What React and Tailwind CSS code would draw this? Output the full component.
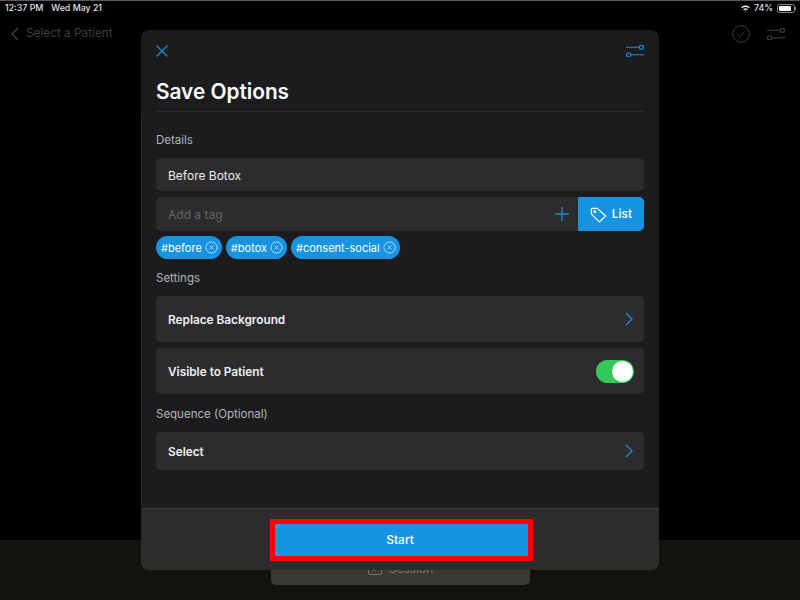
import React from "react";

const Sliders = ({ color }) => (
  <svg viewBox="0 0 18 12" width="18" height="12" fill="none" stroke={color} strokeWidth="1.1">
    <path d="M0 2.3H13" />
    <circle cx="15.4" cy="2.3" r="2.1" />
    <circle cx="2.6" cy="9.8" r="2.1" />
    <path d="M5 9.8H18" />
  </svg>
);

const Chevron = () => (
  <svg viewBox="0 0 8 14" width="8" height="14" fill="none" stroke="#1a8cd8" strokeWidth="1.3">
    <path d="M1 1l6 6-6 6" />
  </svg>
);

const Chip = ({ label }) => (
  <div className="flex items-center h-[23px] pl-[5px] pr-[4px] gap-[3px] rounded-full bg-[#1694e2] text-white text-[11px]">
    <span className="pt-[1px]">{label}</span>
    <svg viewBox="0 0 14 14" width="13" height="13" fill="none" stroke="#cfe9fa" strokeWidth="0.9">
      <circle cx="7" cy="7" r="6" />
      <path d="M5 5l4 4M9 5l-4 4" />
    </svg>
  </div>
);

const Label = ({ children, className }) => (
  <div className={`text-[11.5px] leading-[14px] text-[#b4b4b6] ${className}`}>{children}</div>
);

export default function App() {
  return (
    <div className="relative w-[800px] h-[600px] overflow-hidden bg-black flex flex-col font-['Inter',sans-serif]">
      <div className="h-[1px] bg-[#5a5a5a]" />
      <div className="flex items-center justify-between h-[14px] pl-[5px] pr-[4px] text-[8.8px] font-medium text-[#e2e2e2]">
        <div className="flex gap-[8px]">
          <span>12:37 PM</span>
          <span>Wed May 21</span>
        </div>
        <div className="flex items-center gap-[4px]">
          <svg viewBox="0 0 10 8" width="9" height="7" fill="#e5e5e5">
            <path d="M0 2.6C2.7 0 7.3 0 10 2.6L8.9 3.7C6.8 1.8 3.2 1.8 1.1 3.7zM2.2 4.8C3.8 3.3 6.2 3.3 7.8 4.8L6.7 5.9C5.7 5 4.3 5 3.3 5.9zM3.9 6.6C4.5 6.1 5.5 6.1 6.1 6.6L5 7.8z" />
          </svg>
          <span>74%</span>
          <div className="flex items-center">
            <div className="w-[18px] h-[9px] rounded-[2.5px] border border-[#888] p-[1px] flex">
              <div className="w-[12px] bg-white rounded-[1px]" />
            </div>
            <div className="w-[1px] h-[3px] bg-[#888]" />
          </div>
        </div>
      </div>
      <div className="flex items-center justify-between pl-[10px] pr-[15px] h-[38px]">
        <div className="flex items-center gap-[7px] text-[#3f3f3f] text-[11.8px]">
          <svg viewBox="0 0 9 14" width="9" height="14" fill="none" stroke="#3f3f3f" strokeWidth="1.4">
            <path d="M8 1L2 7l6 6" />
          </svg>
          <span>Select a Patient</span>
        </div>
        <div className="flex items-center gap-[17px]">
          <svg viewBox="0 0 18 18" width="18" height="18" fill="none" stroke="#3f3f3f" strokeWidth="1">
            <circle cx="9" cy="9" r="8.3" />
            <path d="M5.5 9.3l2.4 2.3 4.6-5" />
          </svg>
          <Sliders color="#3f3f3f" />
        </div>
      </div>
      <div className="flex-1" />
      <div className="h-[60px] bg-[#11130e] flex justify-start pl-[271px]">
        <div className="w-[259px] h-[45px] rounded-b-[5px] bg-[#383a33] flex items-start justify-center pt-[22px] gap-[7px] text-[12px] leading-[14px] text-[#77776f]">
          <svg viewBox="0 0 14 13" width="14" height="13" fill="none" stroke="#77776f" strokeWidth="1">
            <rect x="0.5" y="2" width="13" height="10.5" rx="1.5" />
            <path d="M4 6.5l2.5 2.5 3.5-4" />
          </svg>
          <span>Session</span>
        </div>
      </div>

      <div className="absolute left-[141px] top-[30px] w-[518px] h-[540px] rounded-[8px] bg-[#1c1c1e] flex flex-col overflow-hidden">
        <div className="absolute left-0 top-[83px] w-[1px] h-[427px] bg-[#2a2a2c]" />
        <div className="flex-1 px-[15px]">
          <div className="flex items-center justify-between h-[42px]">
            <svg viewBox="0 0 12 12" width="12" height="12" fill="none" stroke="#1a8cd8" strokeWidth="1.2">
              <path d="M0.5 0.5l11 11M11.5 0.5l-11 11" />
            </svg>
            <Sliders color="#1a8cd8" />
          </div>
          <div className="text-[20.8px] leading-[28px] font-semibold text-white mt-[6px]">Save Options</div>
          <div className="h-[1px] bg-[#2b2b2d] mt-[5px]" />
          <Label className="mt-[21px]">Details</Label>
          <div className="mt-[11px] h-[33px] rounded-[5px] bg-[#2c2c2e] flex items-center px-[12px] pt-[2px] text-[12px] text-[#ececec]">Before Botox</div>
          <div className="mt-[6px] h-[34px] rounded-[5px] bg-[#2c2c2e] flex items-center overflow-hidden">
            <span className="flex-1 pl-[12px] pt-[1px] text-[12px] text-[#636366]">Add a tag</span>
            <svg viewBox="0 0 14 14" width="14" height="14" fill="none" stroke="#1a8cd8" strokeWidth="1.3" className="mr-[9px]">
              <path d="M7 0v14M0 7h14" />
            </svg>
            <div className="w-[66px] h-full bg-[#1694e2] flex items-center justify-center gap-[5px] text-white text-[12px] font-medium">
              <svg viewBox="0 0 18 18" width="17" height="17" fill="none" stroke="white" strokeWidth="1.2" strokeLinejoin="round">
                <path d="M1.5 2.5h6.2L16.5 10.6 10 16.8 1.5 8.6z" />
                <circle cx="5" cy="5.8" r="1" />
              </svg>
              <span>List</span>
            </div>
          </div>
          <div className="mt-[5px] flex gap-[4px]">
            <Chip label="#before" />
            <Chip label="#botox" />
            <Chip label="#consent-social" />
          </div>
          <Label className="mt-[12px]">Settings</Label>
          <div className="mt-[11px] h-[46px] rounded-[5px] bg-[#2c2c2e] flex items-center justify-between pl-[12px] pr-[11px] text-[11.8px] font-semibold text-[#f0f0f0]">
            <span className="pt-[4px]">Replace Background</span>
            <Chevron />
          </div>
          <div className="mt-[6px] h-[46px] rounded-[5px] bg-[#2c2c2e] flex items-center justify-between pl-[12px] pr-[10px] text-[11.8px] font-semibold text-[#f0f0f0]">
            <span className="pt-[4px]">Visible to Patient</span>
            <div className="w-[38px] h-[23px] rounded-full bg-[#34c759] flex items-center justify-end pr-[1px]">
              <div className="w-[21px] h-[21px] rounded-full bg-white" />
            </div>
          </div>
          <Label className="mt-[13px]">Sequence (Optional)</Label>
          <div className="mt-[11px] h-[38px] rounded-[5px] bg-[#2c2c2e] flex items-center justify-between pl-[12px] pr-[11px] text-[11.8px] font-semibold text-[#f0f0f0]">
            <span className="pt-[3px]">Select</span>
            <Chevron />
          </div>
        </div>
        <div className="h-[62px] border-t border-[#3a3a3c] bg-[#2c2c2e] flex justify-start pl-[129px] pt-[10px]">
          <div className="w-[263px] h-[42px] border-[5px] border-[#ff0000] bg-[#1694e2] flex items-center justify-center pr-[3px] text-white text-[12px] font-medium">
            Start
          </div>
        </div>
      </div>
    </div>
  );
}
